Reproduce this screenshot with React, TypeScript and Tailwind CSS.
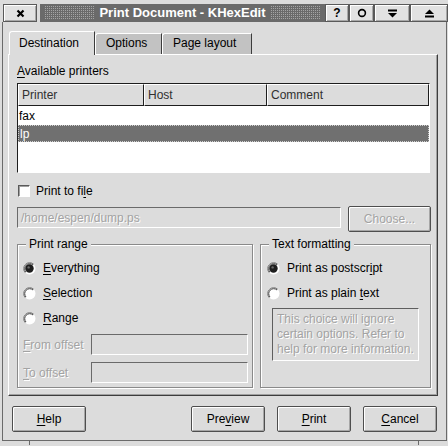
import React from "react";

const dis = "text-[#a3a3a3] [text-shadow:1px_1px_0_#ffffff]";

function Radio({ checked }: { checked?: boolean }) {
  return (
    <svg width="13" height="13" viewBox="0 0 13 13" className="shrink-0">
      <circle cx="6.5" cy="6.5" r="6" fill="#ffffff" />
      <path d="M2.26 10.74 A6 6 0 0 1 10.74 2.26" fill="none" stroke="#7a7a7a" strokeWidth="1" />
      <path d="M2.97 10.03 A5 5 0 0 1 10.03 2.97" fill="none" stroke="#404040" strokeWidth="1" />
      {checked && <circle cx="6.5" cy="6.5" r="4.2" fill="#1e1e1e" />}
      {checked && <circle cx="5.6" cy="5.4" r="1.2" fill="#6a6a6a" />}
    </svg>
  );
}

function Btn({ children, className }: { children: React.ReactNode; className?: string }) {
  return (
    <div
      className={
        "flex items-center justify-center h-[26px] border border-[#4e4e4e] rounded-[2px] bg-[#dcdcdc] shadow-[inset_1px_1px_0_#ffffff,inset_-1px_-1px_0_#a6a6a6] " +
        (className || "")
      }
    >
      {children}
    </div>
  );
}

function TitleBtn({ children, className }: { children: React.ReactNode; className?: string }) {
  return (
    <div
      className={
        "flex items-center justify-center h-[18px] border border-[#5a5a5a] bg-[#e2e2e2] shadow-[inset_1px_1px_0_#ffffff,inset_-1px_-1px_0_#a8a8a8] " +
        (className || "")
      }
    >
      {children}
    </div>
  );
}

function U({ children }: { children: React.ReactNode }) {
  return <span className="underline decoration-1 underline-offset-[2px]">{children}</span>;
}

const dots = "flex-1 h-[14px] [background-image:conic-gradient(#a4a4a4_0_25%,#6a6a6a_0_100%)] [background-size:2px_2px]";

export default function App() {
  return (
    <div className="w-[448px] h-[446px] bg-[#dcdcdc] overflow-hidden font-['Liberation_Sans',Arial,sans-serif] text-[12px] leading-[14px] text-black flex flex-col">
      {/* Title bar */}
      <div className="flex h-[22px] pt-[4px] shrink-0">
        <TitleBtn className="ml-[3px] w-[34px]">
          <svg width="9" height="9" viewBox="0 0 9 9">
            <path d="M1.5 1.5 L7.5 7.5 M7.5 1.5 L1.5 7.5" stroke="#000" strokeWidth="2.2" />
          </svg>
        </TitleBtn>
        <div className="ml-[3px] w-[285px] h-[18px] bg-[#6a6a6a] flex items-center px-[4px] gap-[4px]">
          <div className={dots} />
          <span className="text-white font-bold text-[13px] leading-[16px] whitespace-nowrap">Print Document - KHexEdit</span>
          <div className={dots} />
        </div>
        <TitleBtn className="w-[24px]">
          <span className="font-bold text-[12px] leading-[12px]">?</span>
        </TitleBtn>
        <TitleBtn className="w-[25px]">
          <svg width="10" height="10" viewBox="0 0 10 10">
            <circle cx="5" cy="5" r="3.4" fill="none" stroke="#000" strokeWidth="1.6" />
          </svg>
        </TitleBtn>
        <TitleBtn className="w-[36px]">
          <svg width="11" height="9" viewBox="0 0 11 9">
            <rect x="1" y="0.5" width="9" height="2" fill="#000" />
            <path d="M1 4 L10 4 L5.5 8.5 Z" fill="#000" />
          </svg>
        </TitleBtn>
        <TitleBtn className="w-[38px]">
          <svg width="11" height="9" viewBox="0 0 11 9">
            <path d="M1 5 L10 5 L5.5 0.5 Z" fill="#000" />
            <rect x="1" y="6.5" width="9" height="2" fill="#000" />
          </svg>
        </TitleBtn>
      </div>

      {/* Window client */}
      <div className="h-[419px] shrink-0 ml-[2px] mr-[1px] border-l border-r border-b border-[#6a6a6a] flex flex-col">
        {/* Tabs */}
        <div className="mt-[9px] ml-[6px] h-[23px] flex items-end">
          <div className="relative z-10 w-[86px] h-[24px] -mb-px bg-[#dcdcdc] border-t border-l border-r border-t-white border-l-white border-r-[#3c3c3c] rounded-tl-[3px] pl-[9px] pt-[4px]">
            Destination
          </div>
          <div className="w-[67px] h-[21px] bg-[#c2c2c2] border-t border-l border-r border-t-white border-l-white border-r-[#3c3c3c] rounded-tl-[3px] pl-[10px] pt-[2px]">
            Options
          </div>
          <div className="w-[90px] h-[21px] bg-[#c2c2c2] border-t border-l border-r border-t-white border-l-white border-r-[#3c3c3c] rounded-tl-[3px] pl-[10px] pt-[2px]">
            Page layout
          </div>
        </div>

        {/* Panel */}
        <div className="ml-[5px] w-[430px] h-[342px] border border-t-white border-l-white border-r-[#3c3c3c] border-b-[#3c3c3c] shadow-[inset_-1px_-1px_0_#a0a0a0] pl-[8px] pr-[6px] pt-[9px] flex flex-col">
          <div>
            <U>A</U>vailable printers
          </div>

          {/* List view */}
          <div className="mt-[5px] w-[413px] h-[90px] bg-white border border-t-[#1e1e1e] border-l-[#1e1e1e] border-r-white border-b-white flex flex-col">
            <div className="h-[22px] flex text-[#303030]">
              <div className="w-[126px] flex items-center pl-[3px] bg-[#dcdcdc] border border-t-white border-l-white border-r-[#1e1e1e] border-b-[#1e1e1e]">
                Printer
              </div>
              <div className="w-[123px] flex items-center pl-[3px] bg-[#dcdcdc] border border-t-white border-l-white border-r-[#1e1e1e] border-b-[#1e1e1e]">
                Host
              </div>
              <div className="flex-1 flex items-center pl-[3px] bg-[#dcdcdc] border border-t-white border-l-white border-r-[#1e1e1e] border-b-[#1e1e1e]">
                Comment
              </div>
            </div>
            <div className="mt-[1px] h-[18px] flex items-center pl-[1px]">fax</div>
            <div className="h-[17px] flex items-center pl-[1px] bg-[#707070] text-white border border-dotted border-[#cfcfcf]">
              lp
            </div>
          </div>

          {/* Print to file */}
          <div className="mt-[11px] h-[14px] flex items-center">
            <div className="ml-[1px] w-[12px] h-[12px] bg-white border border-t-[#5a5a5a] border-l-[#5a5a5a] border-r-white border-b-white shadow-[inset_1px_1px_0_#a0a0a0]" />
            <span className="ml-[6px]">
              Print to fi<U>l</U>e
            </span>
          </div>

          {/* File row */}
          <div className="mt-[8px] h-[24px] flex items-start">
            <div className={"mt-[1px] w-[324px] h-[21px] border border-t-[#6a6a6a] border-l-[#6a6a6a] border-r-white border-b-white flex items-center pl-[3px] " + dis}>
              /home/espen/dump.ps
            </div>
            <Btn className="ml-auto w-[83px] h-[24px]">
              <span className={dis}>Choose...</span>
            </Btn>
          </div>

          {/* Group boxes */}
          <div className="mt-[14px] flex">
            <div className="relative w-[236px] h-[144px] border border-[#8a8a8a] shadow-[inset_1px_1px_0_#ffffff,1px_1px_0_#ffffff] pt-[16px] pl-[5px] flex flex-col">
              <span className="absolute -top-[8px] left-[8px] px-[3px] bg-[#dcdcdc]">Print range</span>
              <div className="flex flex-col gap-[11px]">
                <div className="h-[14px] flex items-center gap-[7px]">
                  <Radio checked />
                  <span>
                    <U>E</U>verything
                  </span>
                </div>
                <div className="h-[14px] flex items-center gap-[7px]">
                  <Radio />
                  <span>
                    <U>S</U>election
                  </span>
                </div>
                <div className="h-[14px] flex items-center gap-[7px]">
                  <Radio />
                  <span>
                    <U>R</U>ange
                  </span>
                </div>
              </div>
              <div className="mt-[9px] h-[21px] flex items-center">
                <span className={"w-[68px] " + dis}>
                  <U>F</U>rom offset
                </span>
                <div className="w-[157px] h-[21px] border border-t-[#6a6a6a] border-l-[#6a6a6a] border-r-white border-b-white" />
              </div>
              <div className="mt-[7px] h-[21px] flex items-center">
                <span className={"w-[68px] " + dis}>
                  <U>T</U>o offset
                </span>
                <div className="w-[157px] h-[21px] border border-t-[#6a6a6a] border-l-[#6a6a6a] border-r-white border-b-white" />
              </div>
            </div>

            <div className="relative ml-[7px] flex-1 h-[144px] border border-[#8a8a8a] shadow-[inset_1px_1px_0_#ffffff,1px_1px_0_#ffffff] pt-[16px] pl-[6px] flex flex-col">
              <span className="absolute -top-[8px] left-[8px] px-[3px] bg-[#dcdcdc]">Text formatting</span>
              <div className="flex flex-col gap-[11px]">
                <div className="h-[14px] flex items-center gap-[7px]">
                  <Radio checked />
                  <span>
                    Print as postscr<U>i</U>pt
                  </span>
                </div>
                <div className="h-[14px] flex items-center gap-[7px]">
                  <Radio />
                  <span>
                    Print as plain <U>t</U>ext
                  </span>
                </div>
              </div>
              <div className={"mt-[8px] ml-[5px] w-[147px] h-[53px] border border-t-[#5e5e5e] border-l-[#5e5e5e] border-r-white border-b-white pl-[4px] pt-[3px] leading-[15px] whitespace-nowrap " + dis}>
                <div>This choice will ignore</div>
                <div>certain options. Refer to</div>
                <div>help for more information.</div>
              </div>
            </div>
          </div>
        </div>

        {/* Bottom buttons */}
        <div className="mt-[10px] flex items-center pl-[9px] pr-[9px]">
          <Btn className="w-[74px]">
            <span>
              <U>H</U>elp
            </span>
          </Btn>
          <Btn className="ml-auto w-[74px]">
            <span>
              Pre<U>v</U>iew
            </span>
          </Btn>
          <Btn className="ml-[12px] w-[74px]">
            <span>
              <U>P</U>rint
            </span>
          </Btn>
          <Btn className="ml-[12px] w-[74px]">
            <span>
              <U>C</U>ancel
            </span>
          </Btn>
        </div>
      </div>

      {/* Bottom frame strip */}
      <div className="h-[5px] flex">
        <div className="ml-[29px] w-px h-[4px] bg-[#6a6a6a]" />
        <div className="ml-auto mr-[29px] w-px h-[4px] bg-[#6a6a6a]" />
      </div>
    </div>
  );
}
